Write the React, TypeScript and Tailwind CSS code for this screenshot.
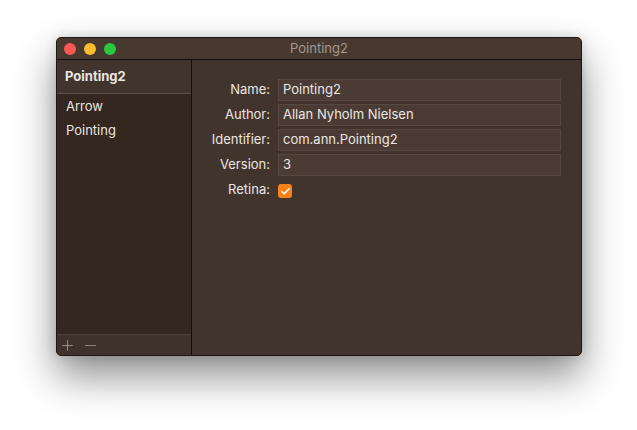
import { Plus, Minus, Check } from "lucide-react";

const fields = [
  { label: "Name:", value: "Pointing2" },
  { label: "Author:", value: "Allan Nyholm Nielsen" },
  { label: "Identifier:", value: "com.ann.Pointing2" },
  { label: "Version:", value: "3" },
];

export default function App() {
  return (
    <div
      className="w-[637px] h-[430px] bg-white pt-[37px] pl-[56px] text-[13px] text-[#ebe5e1]"
      style={{ fontFamily: "Inter, 'Noto Sans', sans-serif" }}
    >
      <div className="w-[526px] h-[319px] flex flex-col rounded-[5px] overflow-hidden border border-[#1e1814] shadow-[0_20px_40px_rgba(0,0,0,0.45),0_0_12px_rgba(0,0,0,0.15)] bg-[#41342d]">
        <div className="relative h-[22px] shrink-0 flex items-center bg-[#47392f] border-b border-[#120e0b]">
          <div className="flex gap-[8px] pl-[7px]">
            <span className="w-[12px] h-[12px] rounded-full bg-[#fd5753]" />
            <span className="w-[12px] h-[12px] rounded-full bg-[#fdbc2e]" />
            <span className="w-[12px] h-[12px] rounded-full bg-[#29c840]" />
          </div>
          <div className="absolute inset-0 flex items-center justify-center text-[13px] text-[#a39892]">
            Pointing2
          </div>
        </div>
        <div className="flex flex-1 min-h-0">
          <aside className="w-[135px] shrink-0 flex flex-col bg-[#33271f] border-r border-[#120e0b]">
            <div className="h-[34px] shrink-0 flex items-center pl-[8px] pt-[1px] font-bold bg-[#41342d] border-b border-[#5a4b43]">
              Pointing2
            </div>
            <div className="flex-1 pt-[1px]">
              <div className="h-[24px] flex items-center pl-[9px]">Arrow</div>
              <div className="h-[24px] flex items-center pl-[9px]">Pointing</div>
            </div>
            <div className="h-[21px] shrink-0 flex items-center gap-[6px] pl-[2px] pt-[1px] bg-[#3f322b] border-t border-[#4f4139] text-[#aaa09a]">
              <Plus size={17} strokeWidth={1.1} />
              <Minus size={17} strokeWidth={1.1} />
            </div>
          </aside>
          <main className="flex-1 pt-[19px] pr-[20px] flex flex-col gap-[3px]">
            {fields.map((f) => (
              <div key={f.label} className="flex items-center h-[22px]">
                <div className="w-[78px] text-right">{f.label}</div>
                <div className="ml-[8px] flex-1 h-[22px] flex items-center pl-[4px] bg-[#4a3c35] border border-[#564840]">
                  {f.value}
                </div>
              </div>
            ))}
            <div className="flex items-center h-[22px]">
              <div className="w-[78px] text-right">Retina:</div>
              <div className="ml-[8px] mt-[2px] w-[14px] h-[14px] rounded-[3px] bg-[#f7821b] flex items-center justify-center text-white">
                <Check size={11} strokeWidth={3} />
              </div>
            </div>
          </main>
        </div>
      </div>
    </div>
  );
}
